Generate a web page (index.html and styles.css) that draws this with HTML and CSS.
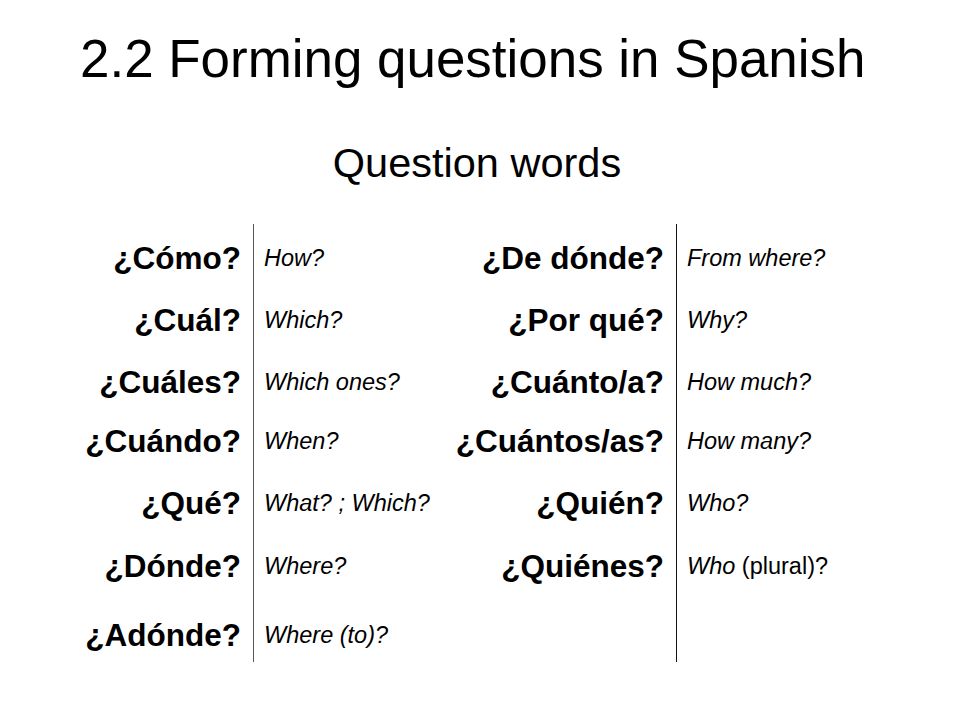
FILE: index.html
```html
<!DOCTYPE html>
<html lang="en">
<head>
<meta charset="utf-8">
<title>2.2 Forming questions in Spanish</title>
<link rel="stylesheet" href="styles.css">
</head>
<body>
<main class="slide">
  <h1 class="title"><span class="title-text">2.2 Forming questions in Spanish</span></h1>
  <h2 class="subtitle">Question words</h2>
  <div class="qtable">
    <div class="es">¿Cómo?</div><div class="en en-a">How?</div>
    <div class="es">¿De dónde?</div><div class="en en-b">From where?</div>

    <div class="es">¿Cuál?</div><div class="en en-a">Which?</div>
    <div class="es">¿Por qué?</div><div class="en en-b">Why?</div>

    <div class="es">¿Cuáles?</div><div class="en en-a">Which ones?</div>
    <div class="es">¿Cuánto/a?</div><div class="en en-b">How much?</div>

    <div class="es">¿Cuándo?</div><div class="en en-a">When?</div>
    <div class="es">¿Cuántos/as?</div><div class="en en-b">How many?</div>

    <div class="es">¿Qué?</div><div class="en en-a">What? ; Which?</div>
    <div class="es">¿Quién?</div><div class="en en-b">Who?</div>

    <div class="es">¿Dónde?</div><div class="en en-a">Where?</div>
    <div class="es">¿Quiénes?</div><div class="en en-b">Who <span class="upright">(plural)?</span></div>

    <div class="es">¿Adónde?</div><div class="en en-a">Where (to)?</div>
    <div class="es"></div><div class="en en-b"></div>
  </div>
</main>
</body>
</html>
```

FILE: styles.css
```css
html, body {
  margin: 0;
  padding: 0;
  background: #ffffff;
}

body {
  width: 960px;
  height: 720px;
  overflow: hidden;
  font-family: "Liberation Sans", Arial, sans-serif;
  color: #000000;
}

.slide {
  display: flex;
  flex-direction: column;
}

.title {
  margin: 27px 0 0;
  padding-right: 14px;
  font-size: 54px;
  font-weight: normal;
  line-height: 62px;
  text-align: center;
}

.title-text {
  display: inline-block;
  transform: scaleX(0.98);
  white-space: nowrap;
}

.subtitle {
  margin: 50px 0 0;
  padding-right: 6px;
  font-size: 41.5px;
  font-weight: normal;
  line-height: 47px;
  text-align: center;
}

.qtable {
  margin: 38px 0 0 70px;
  display: grid;
  grid-template-columns: 183px 187px 236px 214px;
  grid-template-rows: 62px 62px 59px 62px 63px 69px 61px;
  align-items: stretch;
}

.es,
.en {
  padding-top: 17px;
  line-height: 34px;
  white-space: nowrap;
}

.es {
  font-size: 31.5px;
  font-weight: bold;
  text-align: right;
  padding-right: 12px;
}

.en {
  font-size: 23.5px;
  font-style: italic;
  padding-left: 10px;
}

.en-a {
  border-left: 1px solid #555555;
}

.en-b {
  border-left: 1px solid #111111;
}

.upright {
  font-style: normal;
}
```
